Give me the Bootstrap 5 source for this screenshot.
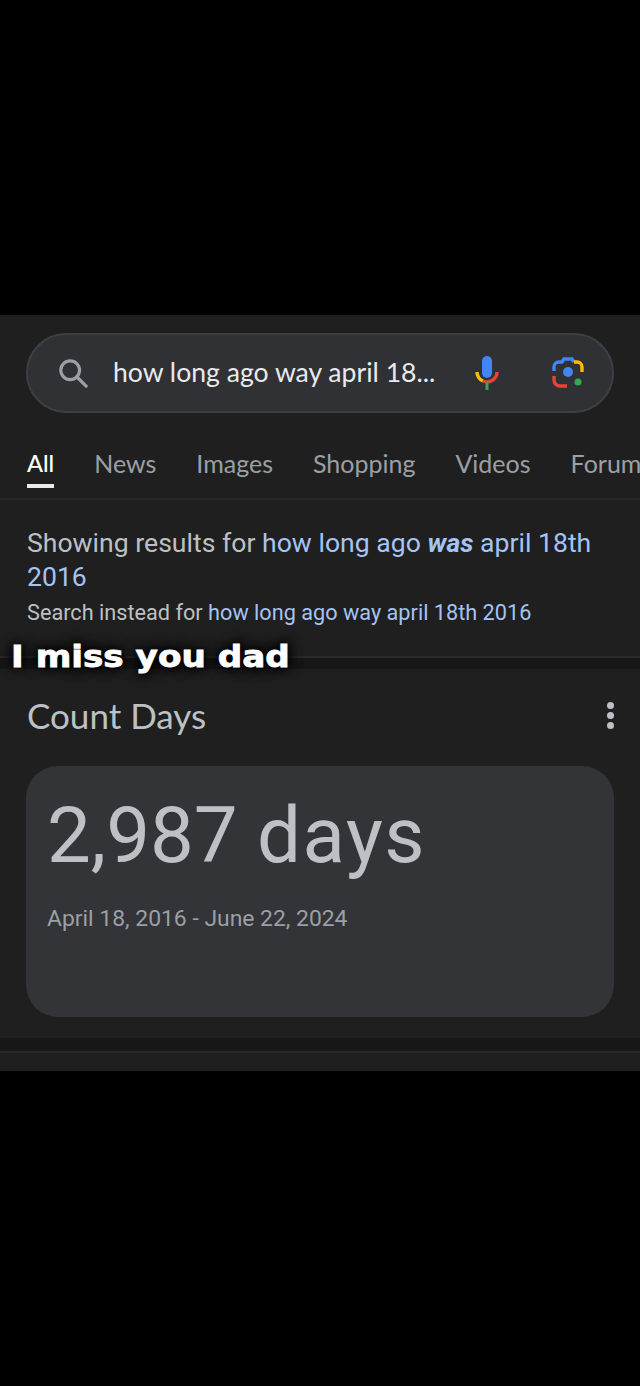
<!DOCTYPE html>
<html lang="en">
  <head>
    <meta charset="UTF-8" />
    <title>how long ago way april 18th 2016</title>
    <link rel="stylesheet" href="https://cdn.jsdelivr.net/npm/bootstrap@5.3.3/dist/css/bootstrap.min.css" />
    <style>
      body { background: #000; font-family: Roboto, "Liberation Sans", sans-serif; }
      .screen { width: 640px; height: 1386px; padding-top: 315px; overflow: hidden; }
      .panel { height: 756px; background: #1f1f1f; position: relative; overflow: hidden; }
      .search-wrap { padding: 18px 26px 0 26px; }
      .search-pill {
        height: 80px; background: #303134; border: 2px solid #3c4043; border-radius: 40px;
        padding: 0 0 0 30px;
      }
      .query { font-family: Lato, sans-serif; font-size: 26.6px; color: #e8eaed; width: 361px; margin-left: 25px; white-space: nowrap; }
      .mic-icon { flex: none; }
      .lens-icon { flex: none; margin-left: 52px; }
      .tabs { height: 87px; padding: 0 0 0 27px; border-bottom: 2px solid #28292b; gap: 40px; overflow: hidden; white-space: nowrap; }
      .tab-item { font-size: 25px; color: #9aa0a6; height: 85px; line-height: 32px; padding-top: 34px; position: relative; font-family: Lato, sans-serif; }
      .tab-item.on { color: #fff; font-size: 23.5px; font-weight: 500; }
      .tab-item.on::after { content: ""; position: absolute; left: 0; right: 0; top: 71px; height: 4px; background: #e8eaed; }
      .fix-box { padding: 26px 27px 0; height: 156px; }
      .fix-main { font-size: 26.6px; line-height: 34px; color: #bdc1c6; }
      .fix-sub { font-size: 21.7px; line-height: 30px; color: #bdc1c6; margin-top: 4px; }
      .fix-box a { color: #a4c4f4; text-decoration: none; }
      .band { height: 13px; background: #171717; border-top: 2px solid #28292b; }
      .count-head { height: 97px; padding: 0 26px 5px 27px; }
      .count-title { font-family: Lato, sans-serif; font-size: 35px; color: #bdc1c6; }
      .dots { gap: 3px; }
      .dots span { width: 7px; height: 7px; border-radius: 50%; background: #bdc1c6; display: block; }
      .count-card { margin: 0 26px; height: 251px; background: #333438; border-radius: 32px; padding: 20px 21px; }
      .count-num { font-size: 78px; line-height: 100px; color: #bdc1c6; }
      .count-unit { letter-spacing: 1.5px; }
      .count-range { font-size: 22.9px; color: #9aa0a6; margin-top: 16px; }
      .band-end { height: 15px; margin-top: 21px; background: #171717; border-bottom: 2px solid #28292b; }
      .caption {
        position: absolute; left: 11px; top: 322px; margin: 0; white-space: nowrap;
        font-family: "DejaVu Sans", sans-serif; font-weight: 700; font-size: 30px; line-height: 40px; color: #fff;
        transform: scaleX(1.14); transform-origin: left center; -webkit-text-stroke: .8px #fff;
        text-shadow: 0 0 8px #000, 0 0 12px #000, 0 0 14px #000;
      }
    </style>
  </head>
  <body>
    <div class="screen">
      <div class="panel">
        <div class="search-wrap">
          <div class="search-pill d-flex align-items-center">
            <svg width="30" height="30" viewBox="0 0 32 32" fill="none" stroke="#9aa0a6" stroke-width="3.4">
              <circle cx="13" cy="13" r="10" />
              <path d="M20 20l10 10" stroke-linecap="round" />
            </svg>
            <div class="query">how long ago way april 18...</div>
            <svg class="mic-icon" width="26" height="36" viewBox="0 0 26 36" fill="none">
              <path d="M3 17a10 10 0 0 0 6 9" stroke="#fbbc04" stroke-width="3.4" />
              <path d="M9 26a10 10 0 0 0 14-9" stroke="#ea4335" stroke-width="3.4" />
              <rect x="11.5" y="27" width="3" height="8" fill="#34a853" />
              <rect x="8" y="1" width="10" height="22" rx="5" fill="#4285f4" />
            </svg>
            <svg class="lens-icon" width="32" height="32" viewBox="0 0 32 32" fill="none" stroke-width="3.4">
              <path d="M2 14v-4a5 5 0 0 1 5-5h3l2-3h8l2 3" stroke="#4285f4" />
              <path d="M22 5h3a5 5 0 0 1 5 5v5" stroke="#fbbc04" />
              <path d="M2 19v4a6 6 0 0 0 6 6h7" stroke="#ea4335" />
              <circle cx="16" cy="15" r="5" fill="#4285f4" stroke="none" />
              <circle cx="26" cy="25" r="3.5" fill="#34a853" stroke="none" />
            </svg>
          </div>
        </div>
        <div class="tabs d-flex">
          <div class="tab-item on">All</div>
          <div class="tab-item">News</div>
          <div class="tab-item">Images</div>
          <div class="tab-item">Shopping</div>
          <div class="tab-item">Videos</div>
          <div class="tab-item">Forums</div>
        </div>
        <div class="fix-box">
          <div class="fix-main">Showing results for <a href="#">how long ago <b><i>was</i></b> april 18th 2016</a></div>
          <div class="fix-sub">Search instead for <a href="#">how long ago way april 18th 2016</a></div>
        </div>
        <div class="band"></div>
        <div class="count-head d-flex align-items-center justify-content-between">
          <div class="count-title">Count Days</div>
          <div class="dots d-flex flex-column"><span></span><span></span><span></span></div>
        </div>
        <div class="count-card">
          <div class="count-num">2,987 <span class="count-unit">days</span></div>
          <div class="count-range">April 18, 2016 - June 22, 2024</div>
        </div>
        <div class="band-end"></div>
        <p class="caption">I miss you dad</p>
      </div>
    </div>
    <script src="https://cdn.jsdelivr.net/npm/bootstrap@5.3.3/dist/js/bootstrap.bundle.min.js"></script>
  </body>
</html>
